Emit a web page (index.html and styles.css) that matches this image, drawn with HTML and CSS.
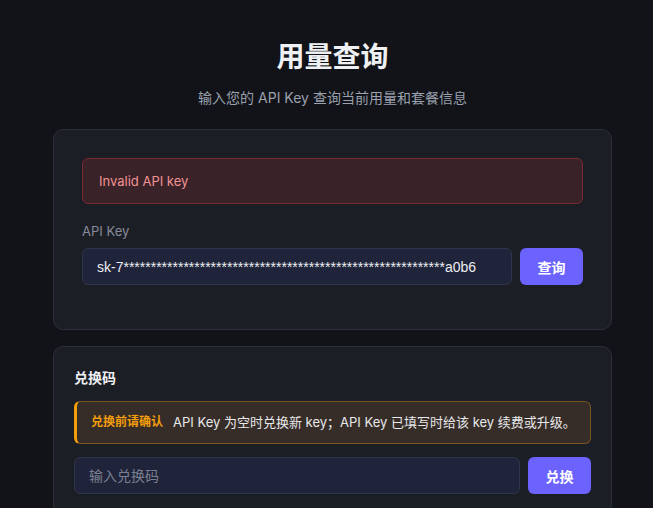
FILE: index.html
```html
<!DOCTYPE html>
<html lang="zh-CN">
<head>
<meta charset="utf-8">
<title>用量查询</title>
<link rel="stylesheet" href="styles.css">
</head>
<body>
<main class="page">
  <header class="hero">
    <h1 class="title">用量查询</h1>
    <p class="subtitle">输入您的 API Key 查询当前用量和套餐信息</p>
  </header>

  <section class="card card-query">
    <div class="alert-error">Invalid API key</div>
    <div class="field">
      <label class="label" for="apikey">API Key</label>
      <div class="row">
        <input id="apikey" class="input input-key" type="text" value="sk-7***********************************************************a0b6">
        <button class="btn" type="button">查询</button>
      </div>
    </div>
  </section>

  <section class="card card-redeem">
    <h2 class="card-title">兑换码</h2>
    <div class="alert-warn">
      <span class="warn-title">兑换前请确认</span>
      <span class="warn-text">API Key 为空时兑换新 key；API Key 已填写时给该 key 续费或升级。</span>
    </div>
    <div class="row">
      <input class="input" type="text" placeholder="输入兑换码">
      <button class="btn" type="button">兑换</button>
    </div>
  </section>
</main>
</body>
</html>
```

FILE: styles.css
```css
* { box-sizing: border-box; }

html, body {
  margin: 0;
  padding: 0;
  background: #111318;
  height: 100%;
  overflow: hidden;
}

body {
  font-family: Inter, "Noto Sans CJK SC", sans-serif;
  color: #e5e7eb;
}

.page {
  width: 559px;
  margin: 0 0 0 53px;
  padding-top: 39px;
}

.hero {
  text-align: center;
}

.title {
  margin: 0;
  font-size: 28px;
  line-height: 36px;
  font-weight: 700;
  color: #eef0f4;
}

.subtitle {
  margin: 13px 0 0;
  font-size: 14px;
  line-height: 20px;
  color: #9aa0ad;
}

.card {
  background: #1c1e26;
  border: 1px solid #2b2e3b;
  border-radius: 10px;
}

.card-query {
  margin-top: 21px;
  padding: 28px 28px 44px;
}

.alert-error {
  background: #3a2229;
  border: 1px solid #7a2a33;
  border-radius: 6px;
  padding: 14px 16px;
  font-size: 13px;
  line-height: 16px;
  color: #f19393;
}

.field {
  margin-top: 18px;
}

.label {
  display: block;
  font-size: 13px;
  line-height: 18px;
  color: #868b99;
  margin-bottom: 8px;
}

.row {
  display: flex;
  gap: 8px;
}

.input {
  flex: 1;
  min-width: 0;
  height: 37px;
  background: #20243a;
  border: 1px solid #2f3449;
  border-radius: 6px;
  padding: 0 14px;
  font-family: "Liberation Sans", "Noto Sans CJK SC", sans-serif;
  font-size: 14px;
  color: #eceef2;
  outline: none;
}

.input::placeholder {
  color: #7b8091;
  font-family: "Noto Sans CJK SC", sans-serif;
}

.btn {
  width: 63px;
  height: 37px;
  border: none;
  border-radius: 6px;
  background: #6c63ff;
  color: #ffffff;
  font-family: "Noto Sans CJK SC", sans-serif;
  font-size: 14px;
  font-weight: 700;
  cursor: pointer;
}

.card-redeem {
  margin-top: 16px;
  padding: 21px 20px 20px;
}

.card-title {
  margin: 0;
  font-size: 14px;
  line-height: 20px;
  font-weight: 700;
  color: #eef0f4;
}

.alert-warn {
  margin: 13px 0 13px;
  background: #372d28;
  border: 1px solid #7a5322;
  border-left: 3px solid #f59e0b;
  border-radius: 6px;
  padding: 12px 14px 13px;
  line-height: 16px;
  display: flex;
  align-items: center;
  gap: 10px;
}

.warn-title {
  font-size: 12px;
  font-weight: 700;
  color: #f59e0b;
}

.warn-text {
  font-size: 13px;
  color: #e8e9ec;
}
```
